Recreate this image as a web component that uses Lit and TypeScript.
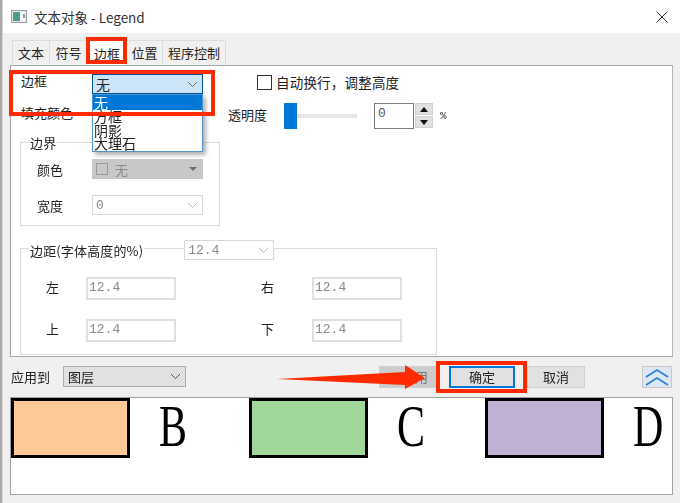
import { LitElement, html, css } from "lit";
import { customElement } from "lit/decorators.js";

const chev = html`<svg class="chev" width="11" height="7" viewBox="0 0 11 7"><path d="M1 1l4.500 4.500L10 1" fill="none" stroke="currentColor" stroke-width="1"/></svg>`;

@customElement("app-root")
export class AppRoot extends LitElement {
  static styles = css`
    :host { display: block; width: 680px; height: 503px; overflow: hidden; position: relative;
      font-family: "Noto Sans CJK SC", "Noto Sans", sans-serif; font-size: 13px; color: #222; background: #f0f0f0; }
    * { box-sizing: border-box; }
    .screen { display: flex; width: 680px; height: 503px; position: relative; filter: blur(0.3px); }
    .edge { width: 3px; flex: none; background: #a9a9a9; border-right: 1px solid #d8d8d8; }
    .win { flex: 1; display: flex; flex-direction: column; min-width: 0; }
    .titlebar { height: 33px; flex: none; background: #fff; display: flex; align-items: center; padding-left: 8px; }
    .title { margin-left: 7px; font-size: 13.5px; line-height: 18px; color: #333; }
    .close { margin-left: auto; margin-right: 12px; display: block; }
    .body { flex: 1; display: flex; flex-direction: column; padding: 7px 7px 8px 7px; }
    .tabs { display: flex; height: 25px; padding-left: 2px; flex: none; }
    .tab { height: 24px; border: 1px solid #dcdcdc; border-bottom: none; border-left: none; display: flex; align-items: center; justify-content: center; font-size: 13px; background: #f0f0f0; }
    .tab.first { border-left: 1px solid #dcdcdc; }
    .tab.sel { background: #fff; height: 25px; margin-top: 0; }
    .w38 { width: 38px; }
    .w39 { width: 39px; }
    .w36 { width: 36px; }
    .w63 { width: 63px; }
    .panel { height: 292px; flex: none; background: #fff; border: 1px solid #a6a6b0; border-right-color: #b5b5bb; padding-top: 8px; }
    .row { display: flex; align-items: center; padding-left: 10px; }
    .row1 { height: 20px; }
    .row2 { height: 27px; margin-top: 8px; }
    .lab { width: 71px; flex: none; line-height: 16px; }
    .row1 .lab { padding-bottom: 0; margin-bottom: 6px; }
    .row2 .lab { margin-bottom: 5px; }
    .combo { height: 20px; display: flex; align-items: center; padding: 0 4px 0 3px; justify-content: space-between; flex: none; font-size: 13px; }
    .combo.focus { width: 111px; background: #cce4f7; border: 1px solid #005499; font-size: 14px; }
    .focus .chev { color: #707070; }
    .chev { color: #555; flex: none; }
    .cb { width: 15px; height: 15px; background: #fff; border: 1px solid #333; margin: 0 0 4px 54px; flex: none; }
    .wrap { margin: 0 0 5px 4px; font-size: 13.5px; letter-spacing: 0.2px; }
    .alpha { width: 40px; margin: 0 0 2px 136px; flex: none; }
    .slider { width: 73px; height: 26px; margin-left: 16px; display: flex; align-items: center; flex: none; }
    .thumb { width: 13px; height: 26px; background: #0078d7; flex: none; }
    .track { width: 60px; height: 4px; background: #e7e7e7; }
    .num { width: 40px; height: 26px; margin-left: 17px; border: 1px solid #7a7a7a; padding: 0 0 5px 3px; display: flex; align-items: center; font-family: "Liberation Mono", monospace; font-size: 13px; color: #555; flex: none; }
    .spin { width: 18px; height: 25px; margin-left: 1px; display: flex; flex-direction: column; gap: 1px; flex: none; }
    .spin div { flex: 1; background: #e1e1e1; display: flex; align-items: center; justify-content: center; border: 1px solid #d0d0d0; }
    .pct { margin-left: 7px; font-family: "Liberation Mono", monospace; font-size: 11px; font-weight: bold; color: #555; }
    .group { position: relative; margin-left: 9px; border: 1px solid #dcdcdc; }
    .legend { position: absolute; left: 8px; top: -9px; display: flex; align-items: center; }
    .legend > span { background: #fff; padding: 0 1px; line-height: 17px; letter-spacing: 0.15px; }
    .g1 { width: 200px; height: 84px; margin-top: 13px; padding: 16px 0 0 16px; }
    .g2 { width: 417px; height: 107px; margin-top: 22px; }
    .grow { display: flex; align-items: center; height: 20px; }
    .grow + .grow { margin-top: 16px; }
    .glab { width: 55px; flex: none; }
    .disabled { width: 111px; background: #c8c8c8; color: #8a8a8a; padding-left: 4px; padding-right: 6px; }
    .dis-in { display: flex; align-items: center; gap: 7px; }
    .mini { width: 12px; height: 12px; border: 1px solid #9a9a9a; }
    .tri { width: 0; height: 0; border-left: 4px solid transparent; border-right: 4px solid transparent; border-top: 4px solid #707070; }
    .box-sel { border: 1px solid #d9d9d9; background: #fff; color: #8a8a8a; font-family: "Liberation Mono", monospace; }
    .box-sel .chev { color: #b5b5b5; }
    .w111 { width: 111px; }
    .w90 { width: 90px; margin-left: 40px; }
    .mgrid { display: grid; grid-template-columns: 40px 90px 85px 51px 90px; align-items: center; padding: 28px 0 0 25px; row-gap: 19px; }
    .mgrid > span { margin-bottom: 4px; }
    .mgrid .in { height: 23px; border: 2px solid #dfdfdf; padding-left: 1px; padding-bottom: 2px; display: flex; align-items: center; color: #8a8a8a; font-family: "Liberation Mono", monospace; font-size: 13px; background: #fff; }
    .c4 { grid-column: 4; }
    .foot { display: flex; align-items: center; height: 23px; margin-top: 8px; padding-left: 1px; flex: none; }
    .apply { width: 52px; flex: none; font-size: 13px; }
    .combo.layer { width: 123px; height: 21px; background: #e1e1e1; border: 1px solid #adadad; padding-left: 4px; font-size: 13px; }
    .btn { height: 22px; display: flex; align-items: center; justify-content: center; background: #e1e1e1; border: 1px solid #cfcfcf; flex: none; }
    .b-apply { width: 58px; margin-left: 193px; background: #cccccc; color: #777; padding-left: 14px; }
    .b-ok { width: 66px; margin-left: 12px; border: 2px solid #0078d7; }
    .b-cancel { width: 58px; margin-left: 12px; }
    .b-up { width: 30px; margin-left: 57px; background: #dde7f1; border-color: #c9c9c9; }
    .preview { height: 98px; margin-top: 9px; background: #fff; border: 1px solid #a0a0a0; display: grid; grid-template-columns: 238px 236px 1fr; flex: none; }
    .item { display: flex; align-items: flex-start; height: 60px; }
    .sw { width: 119px; height: 60px; border: 3px solid #000; flex: none; }
    .sw.a { background: #fdc995; }
    .sw.b { background: #a0d79b; }
    .sw.c { background: #c0b0d4; }
    .letter { margin: -2px 0 0 29px; font-family: "Liberation Serif", serif; font-size: 60px; line-height: 60px; color: #000; transform: scaleX(0.7); transform-origin: left center; }
    .list { position: absolute; left: 92px; top: 94px; width: 111px; height: 58px; background: #fff; border: 1px solid #4e95d1; box-shadow: 3px 3px 4px rgba(0,0,0,.3); display: flex; flex-direction: column; font-size: 14px; line-height: 13.5px; padding-bottom: 2px; }
    .list div { padding-left: 1px; height: 13.500px; white-space: nowrap; }
    .list .sel { background: #0078d7; color: #fff; height: 15px; line-height: 15px; }
    .red { position: absolute; border: 4px solid #ff2a00; pointer-events: none; }
    .r1 { left: 86px; top: 37px; width: 41px; height: 27px; }
    .r2 { left: 9px; top: 70px; width: 206px; height: 46px; }
    .r3 { left: 436px; top: 361px; width: 91px; height: 32px; }
    .arrow { position: absolute; left: 270px; top: 360px; }
  `;

  render() {
    const item = (c: string, l: string) => html`<div class="item"><div class="sw ${c}"></div><span class="letter">${l}</span></div>`;
    return html`<div class="screen">
      <div class="edge"></div>
      <div class="win">
        <div class="titlebar">
          <svg width="16" height="13" viewBox="0 0 16 13"><rect x=".5" y=".5" width="15" height="12" fill="#e8e8e8" stroke="#9aa0a0"/><rect x="2" y="2" width="7" height="9" fill="#4f9a8e"/><rect x="9" y="2" width="5" height="9" fill="#f6f6f6"/><rect x="12" y="4" width="2" height="4" fill="#8fa0a8"/></svg>
          <span class="title">文本对象 - Legend</span>
          <svg class="close" width="12" height="12" viewBox="0 0 12 12"><path d="M.5.5l11 11M11.500.5l-11 11" stroke="#333" stroke-width="1" fill="none"/></svg>
        </div>
        <div class="body">
          <div class="tabs">
            <div class="tab first w38">文本</div>
            <div class="tab w38">符号</div>
            <div class="tab sel w39">边框</div>
            <div class="tab w36">位置</div>
            <div class="tab w63">程序控制</div>
          </div>
          <div class="panel">
            <div class="row row1">
              <span class="lab">边框</span>
              <div class="combo focus"><span>无</span>${chev}</div>
              <div class="cb"></div>
              <span class="wrap">自动换行，调整高度</span>
            </div>
            <div class="row row2">
              <span class="lab">填充颜色</span>
              <span class="alpha">透明度</span>
              <div class="slider"><div class="thumb"></div><div class="track"></div></div>
              <div class="num">0</div>
              <div class="spin">
                <div><svg width="8" height="5"><path d="M4 0l4 5H0z" fill="#111"/></svg></div>
                <div><svg width="8" height="5"><path d="M4 5L0 0h8z" fill="#111"/></svg></div>
              </div>
              <span class="pct">%</span>
            </div>
            <div class="group g1">
              <div class="legend"><span>边界</span></div>
              <div class="grow">
                <span class="glab">颜色</span>
                <div class="combo disabled w111"><span class="dis-in"><span class="mini"></span>无</span><span class="tri"></span></div>
              </div>
              <div class="grow">
                <span class="glab">宽度</span>
                <div class="combo box-sel w111"><span>0</span>${chev}</div>
              </div>
            </div>
            <div class="group g2">
              <div class="legend"><span>边距(字体高度的%)</span><div class="combo box-sel w90"><span>12.4</span>${chev}</div></div>
              <div class="mgrid">
                <span>左</span><div class="in">12.4</div><span class="c4">右</span><div class="in">12.4</div>
                <span>上</span><div class="in">12.4</div><span class="c4">下</span><div class="in">12.4</div>
              </div>
            </div>
          </div>
          <div class="foot">
            <span class="apply">应用到</span>
            <div class="combo layer"><span>图层</span>${chev}</div>
            <div class="btn b-apply">应用</div>
            <div class="btn b-ok">确定</div>
            <div class="btn b-cancel">取消</div>
            <div class="btn b-up"><svg width="26" height="18" viewBox="0 0 26 18"><path d="M2 9l11-7 11 7M2 17l11-7 11 7" fill="none" stroke="#2a7fd8" stroke-width="1.600"/></svg></div>
          </div>
          <div class="preview">
            ${item("a", "B")}${item("b", "C")}${item("c", "D")}
          </div>
        </div>
      </div>
      <div class="list">
        <div class="sel">无</div><div>方框</div><div>阴影</div><div>大理石</div>
      </div>
      <div class="red r1"></div>
      <div class="red r2"></div>
      <div class="red r3"></div>
      <svg class="arrow" width="160" height="34" viewBox="0 0 160 34"><path d="M7 19L135 12V5L155 18L135 29V25Z" fill="#ff2a00"/></svg>
    </div>`;
  }
}
